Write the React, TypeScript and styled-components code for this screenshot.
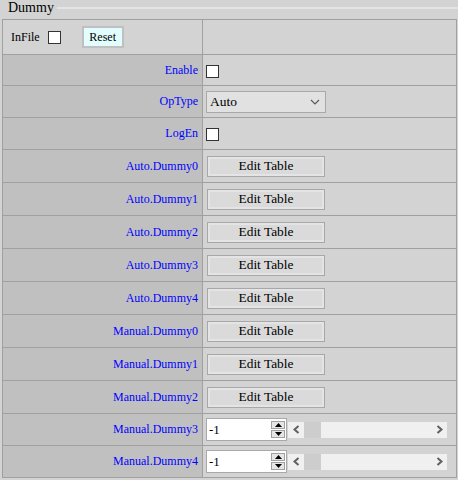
import React from "react";
import styled, { createGlobalStyle } from "styled-components";

const SERIF = `"Liberation Serif", "DejaVu Serif", serif`;

const Global = createGlobalStyle`
  html, body { margin: 0; padding: 0; background: #d3d3d3; }
  body { font-family: ${SERIF}; }
  table, button { font-family: ${SERIF}; }
`;

const Page = styled.div`
  width: 458px;
  height: 480px;
  box-sizing: border-box;
  padding: 0 2px;
  background: #d3d3d3;
  font-family: ${SERIF};
`;

const LegendBar = styled.div`
  display: flex;
  align-items: center;
  height: 19px;
  padding-left: 6px;
  gap: 3px;
`;

const LegendText = styled.span`
  font-size: 14px;
  color: #000;
  line-height: 14px;
  margin-top: -3px;
`;

const LegendLine = styled.div`
  flex: 1;
  height: 2px;
  background: #e4e4e4;
  margin-top: -3px;
  margin-right: -2px;
`;

const Table = styled.table`
  border-collapse: collapse;
  width: 455px;
  table-layout: fixed;
  border: 1px solid #a0a0a0;
`;

const Row = styled.tr<{ $h: number }>`
  height: ${(p) => p.$h}px;
`;

const LabelCell = styled.td<{ $plain?: boolean }>`
  width: 200px;
  border: 1px solid #a0a0a0;
  background: ${(p) => (p.$plain ? "#d3d3d3" : "#c0c0c0")};
  text-align: ${(p) => (p.$plain ? "left" : "right")};
  padding: 0 4px 0 ${(p) => (p.$plain ? "8px" : "0")};
  font-size: 12px;
  color: ${(p) => (p.$plain ? "#000" : "#0000ff")};
  vertical-align: middle;
  box-sizing: border-box;
`;

const ValueCell = styled.td`
  border: 1px solid #a0a0a0;
  background: #d3d3d3;
  padding: 0 0 0 3px;
  vertical-align: middle;
`;

const HeaderContent = styled.div`
  display: flex;
  align-items: center;
`;

const Check = styled.span<{ $ml?: number }>`
  display: inline-block;
  width: 11px;
  height: 11px;
  background: #fff;
  border: 1px solid #333;
  margin-left: ${(p) => p.$ml ?? 0}px;
  vertical-align: middle;
`;

const ResetButton = styled.button`
  margin-left: 21px;
  height: 22px;
  width: 42px;
  padding: 0;
  background: #e2fdfd;
  border: 2px solid #c0c0c0;
  font-family: ${SERIF};
  font-size: 12px;
  color: #000;
`;

const SelectBox = styled.div`
  width: 120px;
  height: 22px;
  box-sizing: border-box;
  border: 1px solid #a9a9a9;
  background: #e1e1e1;
  display: flex;
  align-items: center;
  justify-content: space-between;
  padding: 0 5px 0 3px;
  font-size: 13.5px;
  color: #000;
`;

const EditButton = styled.button`
  width: 118px;
  height: 21px;
  box-sizing: border-box;
  margin-left: 1px;
  border: 1px solid #a8a8a8;
  box-shadow: inset 0 0 0 2px #e4e4e4;
  background: #dadada;
  font-family: ${SERIF};
  font-size: 13.4px;
  color: #000;
  padding: 0;
  display: flex;
  align-items: center;
  justify-content: center;
`;

const SpinRow = styled.div`
  display: flex;
  align-items: center;
`;

const NumberBox = styled.div`
  width: 81px;
  height: 23px;
  box-sizing: border-box;
  border: 1px solid #a9a9a9;
  background: #fff;
  display: flex;
  align-items: center;
  justify-content: space-between;
  padding: 0 1px 0 2px;
  font-size: 13px;
  color: #000;
`;

const Spinner = styled.div`
  display: flex;
  flex-direction: column;
  gap: 1px;
`;

const SpinBtn = styled.div`
  width: 14px;
  height: 8px;
  box-sizing: border-box;
  border: 1px solid #a0a0a0;
  background: #e6e6e6;
  display: flex;
  align-items: center;
  justify-content: center;
`;

const ScrollTrack = styled.div`
  margin-left: 1px;
  width: 159px;
  height: 16px;
  background: #f0f0f0;
  display: flex;
  align-items: center;
`;

const Arrow = styled.span<{ $right?: boolean }>`
  width: 16px;
  height: 16px;
  display: flex;
  align-items: center;
  justify-content: center;
  margin-left: ${(p) => (p.$right ? "auto" : "0")};
`;

const Thumb = styled.div`
  width: 17px;
  height: 16px;
  background: #cdcdcd;
`;

const Chevron = () => (
  <svg width="10" height="6" viewBox="0 0 10 6">
    <path d="M1 1 L5 5 L9 1" fill="none" stroke="#555" strokeWidth="1.1" />
  </svg>
);

const Tri = ({ down }: { down?: boolean }) => (
  <svg width="7" height="4" viewBox="0 0 7 4">
    <path d={down ? "M0 0 H7 L3.5 4 Z" : "M0 4 H7 L3.5 0 Z"} fill="#000" />
  </svg>
);

const ScrollArrow = ({ right }: { right?: boolean }) => (
  <svg width="7" height="9" viewBox="0 0 7 9">
    <path
      d={right ? "M1.5 1 L5.5 4.5 L1.5 8" : "M5.5 1 L1.5 4.5 L5.5 8"}
      fill="none"
      stroke="#606060"
      strokeWidth="2"
    />
  </svg>
);

const Slider = () => (
  <SpinRow>
    <NumberBox>
      <span>-1</span>
      <Spinner>
        <SpinBtn>
          <Tri />
        </SpinBtn>
        <SpinBtn>
          <Tri down />
        </SpinBtn>
      </Spinner>
    </NumberBox>
    <ScrollTrack>
      <Arrow>
        <ScrollArrow />
      </Arrow>
      <Thumb />
      <Arrow $right>
        <ScrollArrow right />
      </Arrow>
    </ScrollTrack>
  </SpinRow>
);

type Item = { label: string; kind: "check" | "select" | "edit" | "slider"; h: number };

const items: Item[] = [
  { label: "Enable", kind: "check", h: 31 },
  { label: "OpType", kind: "select", h: 32 },
  { label: "LogEn", kind: "check", h: 32 },
  { label: "Auto.Dummy0", kind: "edit", h: 33 },
  { label: "Auto.Dummy1", kind: "edit", h: 33 },
  { label: "Auto.Dummy2", kind: "edit", h: 33 },
  { label: "Auto.Dummy3", kind: "edit", h: 33 },
  { label: "Auto.Dummy4", kind: "edit", h: 33 },
  { label: "Manual.Dummy0", kind: "edit", h: 33 },
  { label: "Manual.Dummy1", kind: "edit", h: 33 },
  { label: "Manual.Dummy2", kind: "edit", h: 33 },
  { label: "Manual.Dummy3", kind: "slider", h: 32 },
  { label: "Manual.Dummy4", kind: "slider", h: 32 },
];

const renderValue = (kind: Item["kind"]) => {
  switch (kind) {
    case "check":
      return <Check $ml={0} />;
    case "select":
      return (
        <SelectBox>
          <span>Auto</span>
          <Chevron />
        </SelectBox>
      );
    case "edit":
      return <EditButton>Edit Table</EditButton>;
    case "slider":
      return <Slider />;
  }
};

export default function App() {
  return (
    <Page>
      <Global />
      <LegendBar>
        <LegendText>Dummy</LegendText>
        <LegendLine />
      </LegendBar>
      <Table>
        <tbody>
          <Row $h={35}>
            <LabelCell $plain>
              <HeaderContent>
                <span>InFile</span>
                <Check $ml={8} />
                <ResetButton>Reset</ResetButton>
              </HeaderContent>
            </LabelCell>
            <ValueCell />
          </Row>
          {items.map((it) => (
            <Row key={it.label} $h={it.h}>
              <LabelCell>{it.label}</LabelCell>
              <ValueCell>{renderValue(it.kind)}</ValueCell>
            </Row>
          ))}
        </tbody>
      </Table>
    </Page>
  );
}
